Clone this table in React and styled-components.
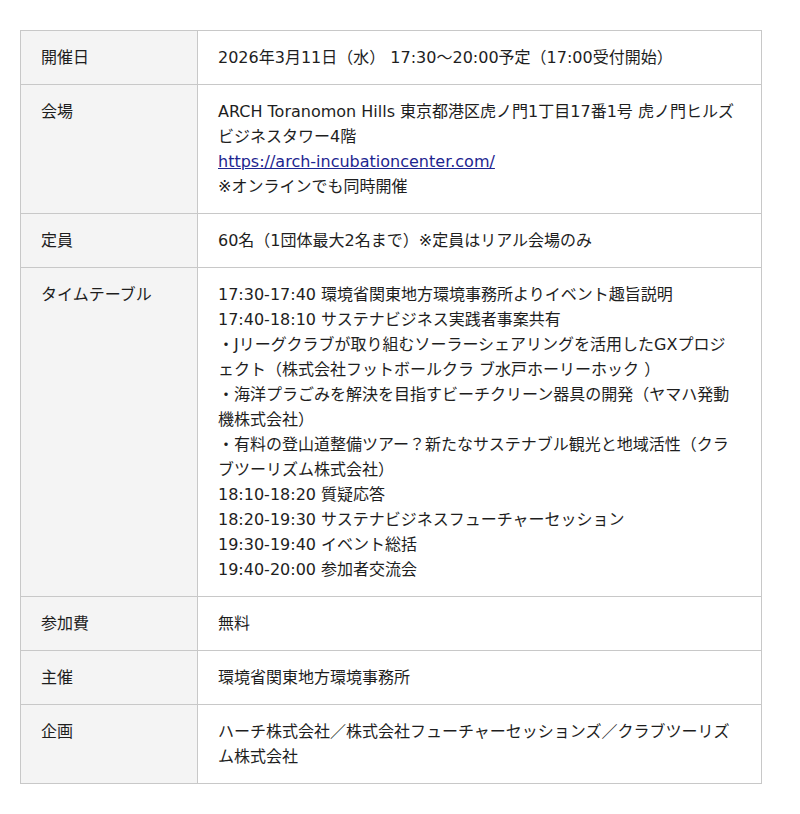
import React from 'react';
import styled, { createGlobalStyle } from 'styled-components';

const GlobalStyle = createGlobalStyle`
   body {
      margin: 0;
      background: #fff;
      font-family: "DejaVu Sans", "Noto Sans CJK JP", sans-serif;
      color: #1e1e1e;
   }
`;

const Page = styled.div`
   padding: 30px 0 0 20px;
`;

const Table = styled.table`
   width: 742px;
   border-collapse: collapse;
   font-size: 16px;
   line-height: 25px;
`;

const Head = styled.th`
   width: 136px;
   padding: 14px 20px;
   background: #f4f4f4;
   border: 1px solid #c8c8c8;
   text-align: left;
   vertical-align: top;
   font-weight: normal;
`;

const Cell = styled.td`
   padding: 14px 20px;
   border: 1px solid #c8c8c8;
   vertical-align: top;
`;

const Link = styled.a`
   color: #1d2590;
   text-decoration: underline;
`;

const rows = [
   ['開催日', ['2026年3月11日（水） 17:30〜20:00予定（17:00受付開始）']],
   ['会場', [
      'ARCH Toranomon Hills 東京都港区虎ノ門1丁目17番1号 虎ノ門ヒルズ ビジネスタワー4階',
      <Link href="#">https://arch-incubationcenter.com/</Link>,
      '※オンラインでも同時開催'
   ]],
   ['定員', ['60名（1団体最大2名まで）※定員はリアル会場のみ']],
   ['タイムテーブル', [
      '17:30-17:40 環境省関東地方環境事務所よりイベント趣旨説明',
      '17:40-18:10 サステナビジネス実践者事案共有',
      '・Jリーグクラブが取り組むソーラーシェアリングを活用したGXプロジェクト（株式会社フットボールクラ ブ水戸ホーリーホック ）',
      '・海洋プラごみを解決を目指すビーチクリーン器具の開発（ヤマハ発動機株式会社）',
      '・有料の登山道整備ツアー？新たなサステナブル観光と地域活性（クラブツーリズム株式会社）',
      '18:10-18:20 質疑応答',
      '18:20-19:30 サステナビジネスフューチャーセッション',
      '19:30-19:40 イベント総括',
      '19:40-20:00 参加者交流会'
   ]],
   ['参加費', ['無料']],
   ['主催', ['環境省関東地方環境事務所']],
   ['企画', ['ハーチ株式会社／株式会社フューチャーセッションズ／クラブツーリズム株式会社']]
];

const App = () => (
   <Page>
      <GlobalStyle />
      <Table>
         <tbody>
            {rows.map(([label, lines]) => (
               <tr key={label}>
                  <Head>{label}</Head>
                  <Cell>
                     {lines.map((line, i) => (
                        <div key={i}>{line}</div>
                     ))}
                  </Cell>
               </tr>
            ))}
         </tbody>
      </Table>
   </Page>
);

export default App;
